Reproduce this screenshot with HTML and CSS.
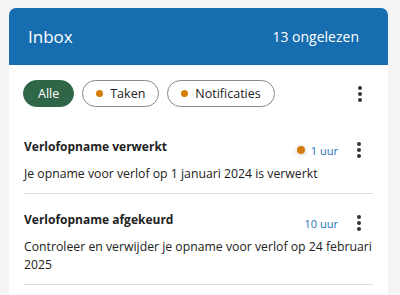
FILE: index.html
```html
<!DOCTYPE html>
<html lang="nl">
<head>
    <meta charset="UTF-8">
    <meta name="viewport" content="width=device-width, initial-scale=1.0">
    <title>Inbox</title>
    <link rel="stylesheet" href="styles.css">
</head>
<body>

    <div class="card">
        <div class="header">
            <span class="title">Inbox</span>
            <span class="count">13 ongelezen</span>
        </div>

        <div class="filters">
            <button class="pill active">Alle</button>
            <button class="pill"><span class="dot"></span>Taken</button>
            <button class="pill"><span class="dot"></span>Notificaties</button>
            <span class="spacer"></span>
            <button class="more"><span></span><span></span><span></span></button>
        </div>

        <div class="item">
            <div class="item-top">
                <div class="item-title">Verlofopname verwerkt</div>
                <div class="meta">
                    <span class="dot glow"></span>
                    <span class="time">1 uur</span>
                    <button class="more"><span></span><span></span><span></span></button>
                </div>
            </div>
            <div class="item-text">Je opname voor verlof op 1 januari 2024 is verwerkt</div>
        </div>

        <div class="item">
            <div class="item-top">
                <div class="item-title">Verlofopname afgekeurd</div>
                <div class="meta">
                    <span class="time">10 uur</span>
                    <button class="more"><span></span><span></span><span></span></button>
                </div>
            </div>
            <div class="item-text">Controleer en verwijder je opname voor verlof op 24 februari 2025</div>
        </div>
    </div>

</body>
</html>
```

FILE: styles.css
```css
body {
    margin: 0;
    padding: 8px 12px 0 9px;
    background-color: #f4f4f4;
    font-family: "Open Sans", sans-serif;
    color: #222;
}
.card {
    background-color: #fff;
    border-radius: 7px 7px 0 0;
    height: 400px;
}
.header {
    display: flex;
    align-items: center;
    justify-content: space-between;
    height: 57px;
    padding: 0 29px 0 19px;
    background-color: #166db0;
    border-radius: 7px 7px 0 0;
    color: #fff;
}
.title {
    font-size: 17px;
}
.count {
    font-size: 14px;
}
.filters {
    display: flex;
    align-items: center;
    gap: 8px;
    padding: 15px 14px 0 14px;
}
.pill {
    display: flex;
    align-items: center;
    gap: 7px;
    height: 27px;
    padding: 0 13px;
    border: 1px solid #888;
    border-radius: 14px;
    background-color: #fff;
    font-family: inherit;
    font-size: 12.5px;
    color: #222;
}
.pill.active {
    background-color: #2e6647;
    border-color: #2e6647;
    color: #fff;
    padding: 0 14px;
}
.dot {
    width: 7px;
    height: 7px;
    border-radius: 50%;
    background-color: #d17d08;
}
.dot.glow {
    width: 8px;
    height: 8px;
    box-shadow: 0 1px 4px 2px rgba(0, 0, 0, 0.08);
}
.spacer {
    flex: 1;
}
.more {
    display: flex;
    flex-direction: column;
    align-items: center;
    gap: 2px;
    width: 16px;
    padding: 0;
    border: none;
    background: none;
}
.more span {
    width: 4px;
    height: 4px;
    border-radius: 50%;
    background-color: #333;
}
.filters .more {
    margin-right: 6px;
}
.item {
    margin: 0 15px;
    padding: 17px 0 10px 0;
    border-bottom: 1px solid #ddd;
}
.filters + .item {
    margin-top: 14px;
}
.item-top {
    display: flex;
    justify-content: space-between;
    align-items: flex-start;
}
.item-title {
    font-weight: bold;
    font-size: 12px;
    line-height: 18px;
}
.meta {
    display: flex;
    align-items: center;
    gap: 6px;
    margin-top: 4px;
    margin-right: 6px;
}
.time {
    font-size: 11px;
    color: #1d72b8;
    margin-right: 7px;
}
.item-text {
    font-size: 12.25px;
    line-height: 18px;
    margin-top: 7px;
}
```
